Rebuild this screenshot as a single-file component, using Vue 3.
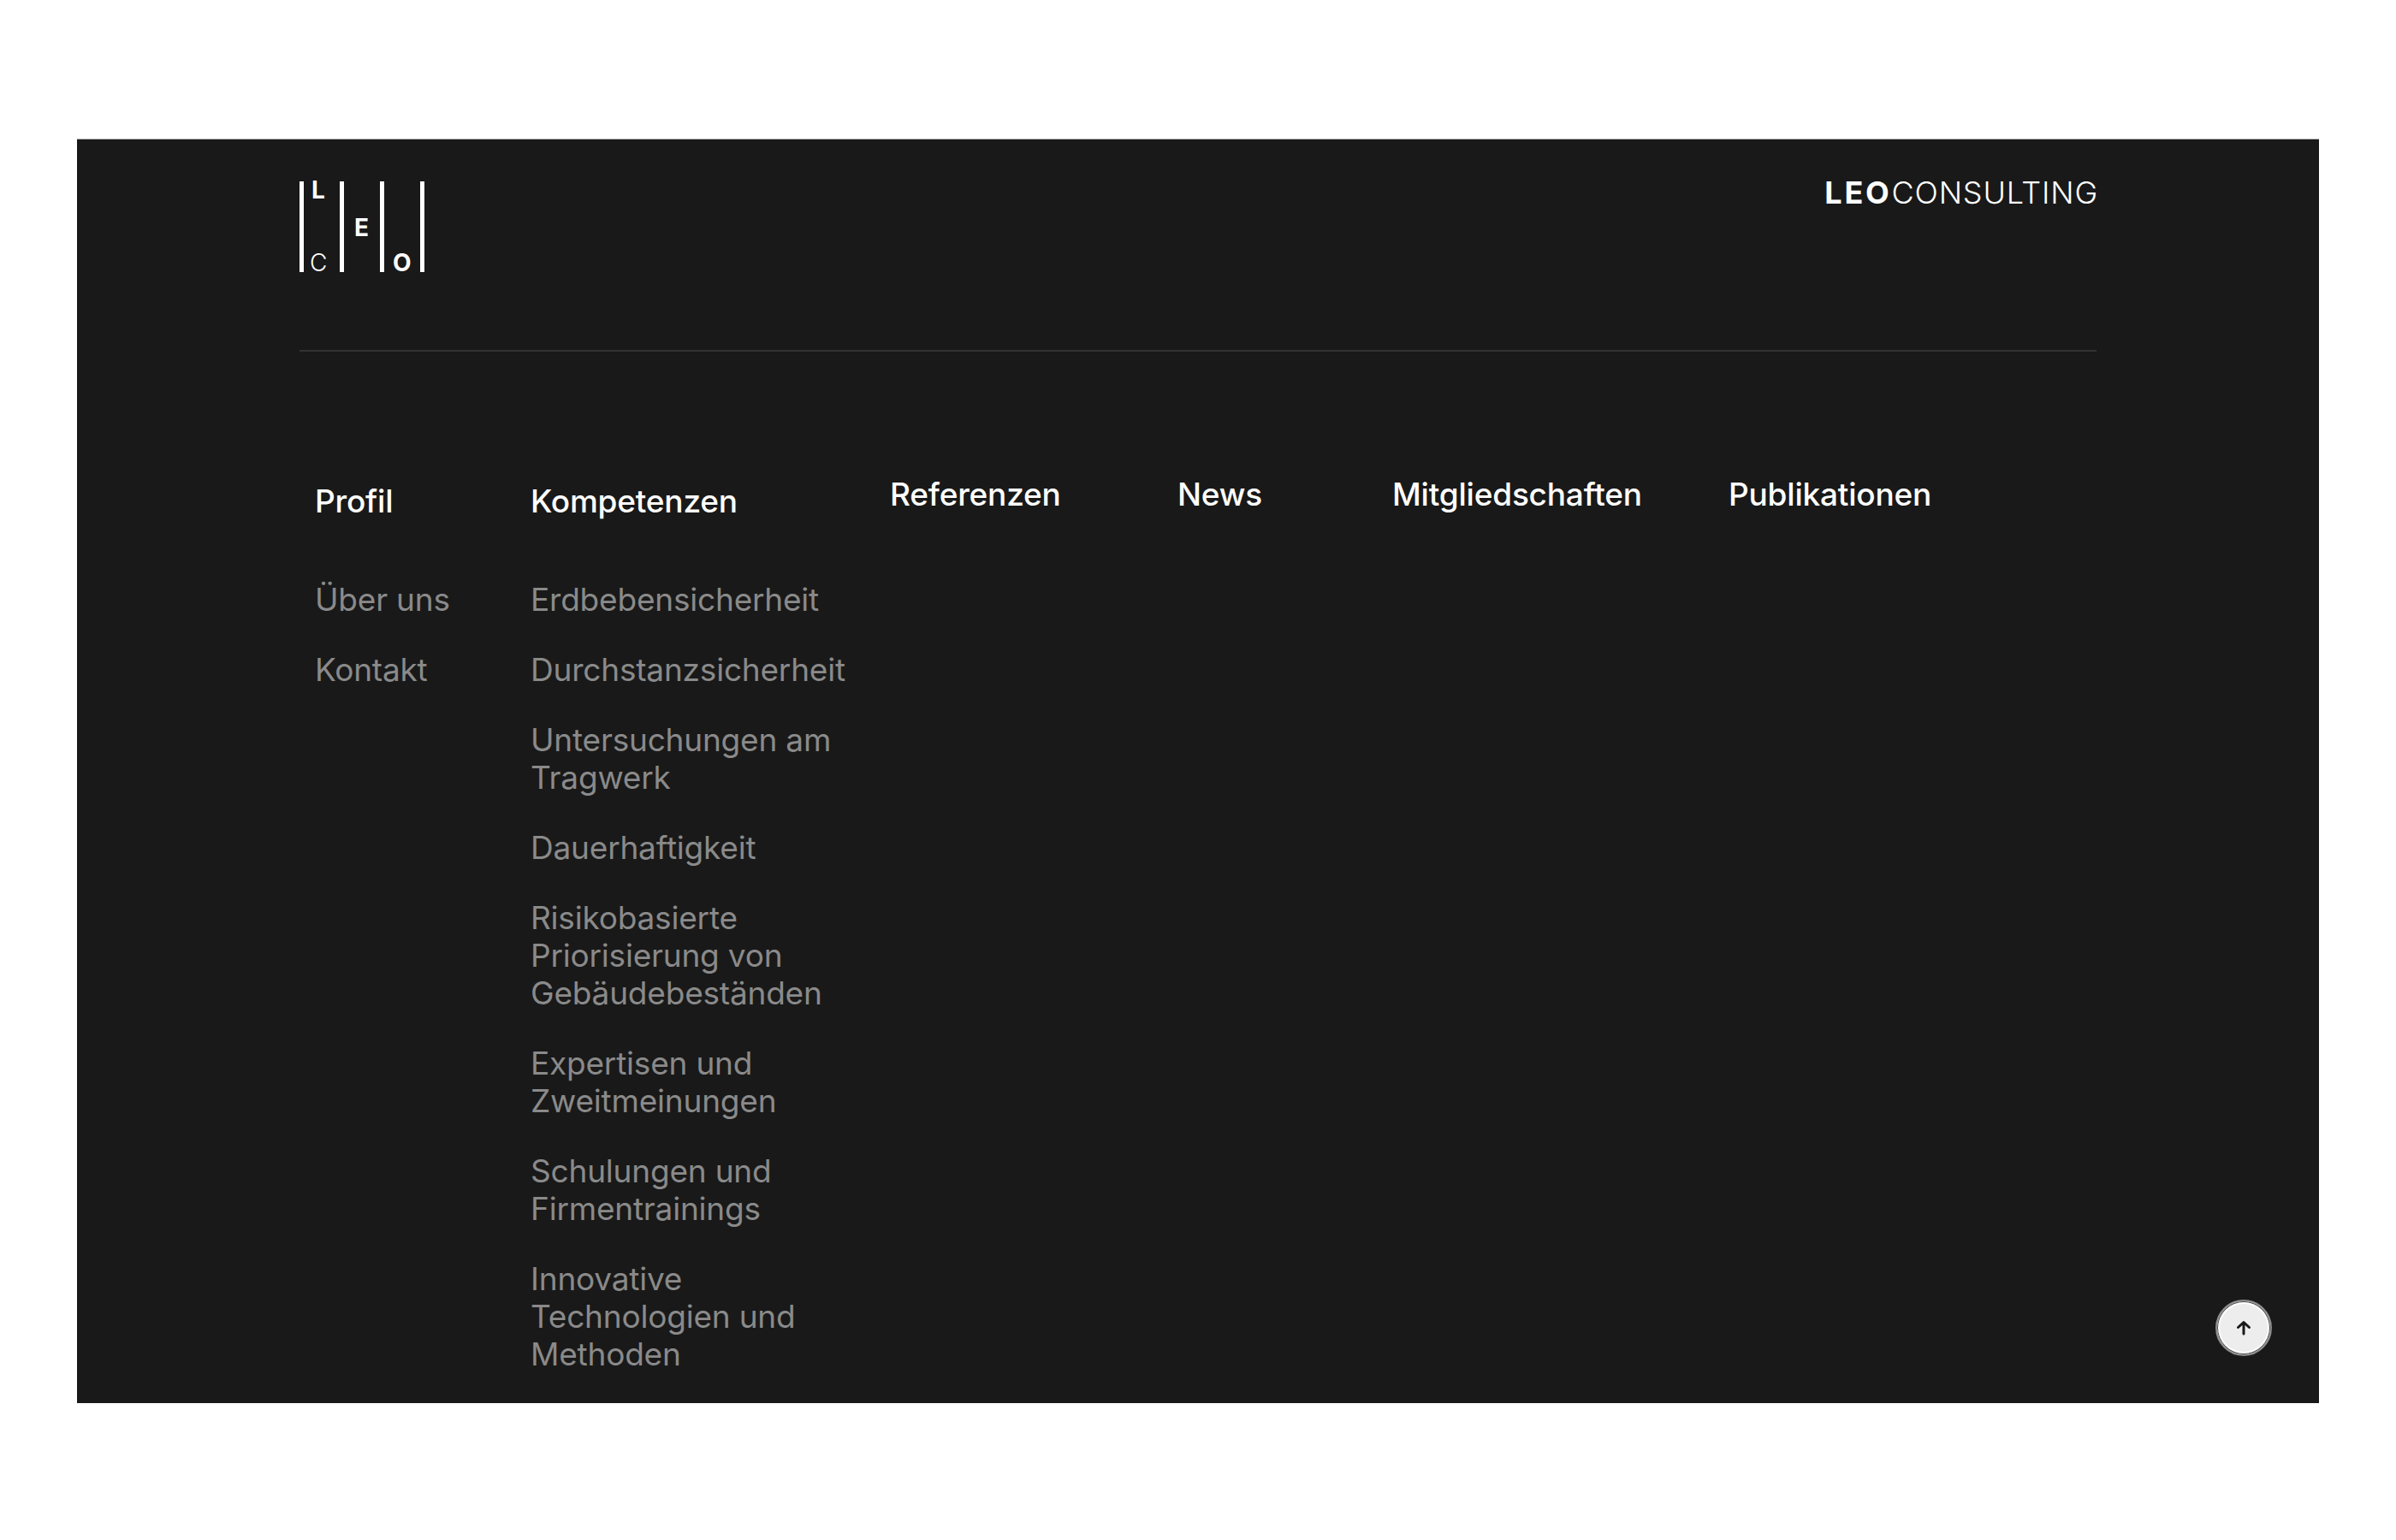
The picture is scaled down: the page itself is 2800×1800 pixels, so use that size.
<script setup>
const columns = [
  { title: 'Profil', offset: true, items: [['Über uns'], ['Kontakt']] },
  {
    title: 'Kompetenzen',
    offset: true,
    items: [
      ['Erdbebensicherheit'],
      ['Durchstanzsicherheit'],
      ['Untersuchungen am', 'Tragwerk'],
      ['Dauerhaftigkeit'],
      ['Risikobasierte', 'Priorisierung von', 'Gebäudebeständen'],
      ['Expertisen und', 'Zweitmeinungen'],
      ['Schulungen und', 'Firmentrainings'],
      ['Innovative', 'Technologien und', 'Methoden']
    ]
  },
  { title: 'Referenzen', items: [] },
  { title: 'News', items: [] },
  { title: 'Mitgliedschaften', items: [] },
  { title: 'Publikationen', items: [] }
]
</script>

<template>
  <div class="page">
    <footer class="panel">
      <div class="inner">
        <header class="top">
          <svg class="logo" width="150" height="110" viewBox="0 0 150 110" aria-label="LEO Logo">
            <g fill="#fff">
              <rect x="0" y="0" width="5" height="106" />
              <rect x="47" y="0" width="5" height="106" />
              <rect x="94" y="0" width="5" height="106" />
              <rect x="141" y="0" width="5" height="106" />
              <text class="lg b" x="14" y="20">L</text>
              <text class="lg b" x="64" y="64">E</text>
              <text class="lg t" x="12" y="105">C</text>
              <text class="lg b" x="109" y="105">O</text>
            </g>
          </svg>
          <div class="brand"><strong>LEO</strong>CONSULTING</div>
        </header>
        <nav class="nav">
          <section v-for="col in columns" :key="col.title" class="col" :class="{ offset: col.offset }">
            <h3 class="title">{{ col.title }}</h3>
            <ul v-if="col.items.length" class="list">
              <li v-for="item in col.items" :key="item[0]">
                <a><template v-for="(line, i) in item" :key="line"><br v-if="i" />{{ line }}</template></a>
              </li>
            </ul>
          </section>
        </nav>
      </div>
      <button class="up" aria-label="Nach oben">
        <svg width="20" height="20" viewBox="0 0 20 20" fill="none" stroke="#1a1a1a" stroke-width="3" stroke-linecap="round" stroke-linejoin="round">
          <path d="M10 17V3.5M3.5 9.5 10 3.500l6.500 6" />
        </svg>
      </button>
    </footer>
  </div>
</template>

<style>
html, body { margin: 0; background: #fff; }
</style>

<style scoped>
.page {
  box-sizing: border-box;
  height: 1800px;
  padding: 162px 90px 160px;
  background: #fff;
  font-family: "Inter", "Liberation Sans", sans-serif;
}
.panel {
  position: relative;
  box-sizing: border-box;
  height: 1478px;
  overflow: hidden;
  border-top: 1px solid #b5b5b5;
  background: #191919;
  color: #fff;
}
.inner {
  display: flex;
  flex-direction: column;
  width: 2100px;
  margin-left: 260px;
}
.top {
  display: flex;
  justify-content: space-between;
  align-items: flex-start;
  height: 248px;
  padding-top: 49px;
  box-sizing: border-box;
  border-bottom: 2px solid #333;
}
.logo { display: block; overflow: visible; }
.lg { font-family: "Inter", sans-serif; font-size: 28px; }
.b { font-weight: 700; }
.t { font-weight: 300; }
.brand {
  font-size: 36px;
  line-height: 44px;
  font-weight: 300;
  letter-spacing: 0.8px;
  margin-right: -2px;
  margin-top: -9px;
}
.brand strong { font-weight: 700; letter-spacing: 2.8px; }
.nav {
  display: grid;
  grid-template-columns: 252px 420px 336px 251px 393px 1fr;
  padding: 145px 0 0 18px;
}
.col { min-width: 0; }
.col.offset { padding-top: 8px; }
.title {
  margin: 0;
  font-size: 37px;
  line-height: 44px;
  font-weight: 500;
  letter-spacing: -0.2px;
  white-space: nowrap;
  color: #fff;
}
.list {
  display: flex;
  flex-direction: column;
  gap: 38px;
  margin: 71px 0 0;
  padding: 0;
  list-style: none;
}
.list a {
  display: block;
  font-size: 37px;
  line-height: 44px;
  letter-spacing: -0.2px;
  white-space: nowrap;
  color: #8a8a8a;
}
.up {
  position: absolute;
  right: 55px;
  bottom: 55px;
  display: flex;
  align-items: center;
  justify-content: center;
  box-sizing: border-box;
  width: 66px;
  height: 66px;
  padding: 0;
  border: 2px solid #8c8c8c;
  border-radius: 50%;
  background: #ededed;
  box-shadow: inset 0 0 0 1px #444, inset 0 0 0 3px #fff;
}
</style>
